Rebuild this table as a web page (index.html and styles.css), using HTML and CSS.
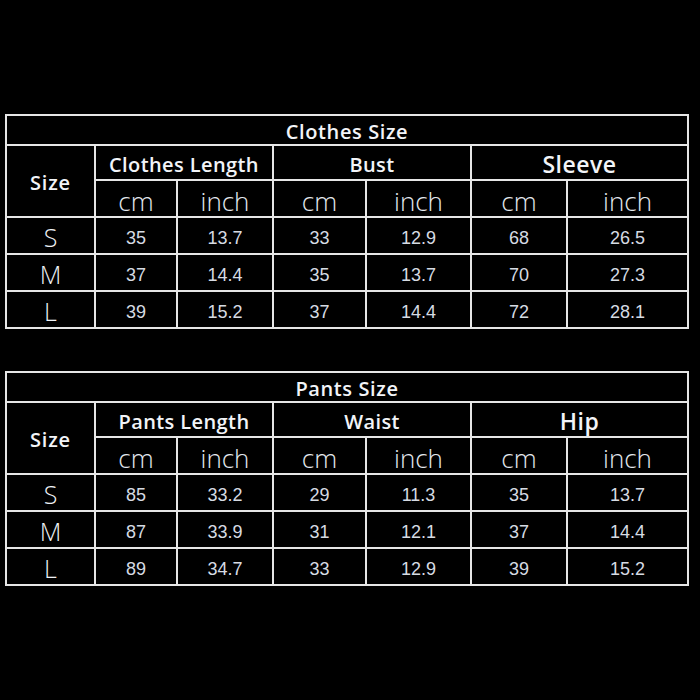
FILE: index.html
```html
<!DOCTYPE html>
<html>
<head>
<meta charset="utf-8">
<link rel="stylesheet" href="styles.css">
</head>
<body>
<div class="page">
  <table class="chart">
    <colgroup>
      <col class="c1"><col class="c2"><col class="c3"><col class="c4"><col class="c5"><col class="c6"><col class="c7">
    </colgroup>
    <tr class="title"><th colspan="7">Clothes Size</th></tr>
    <tr class="h1">
      <th rowspan="2" class="size">Size</th>
      <th colspan="2">Clothes Length</th>
      <th colspan="2">Bust</th>
      <th colspan="2" class="big">Sleeve</th>
    </tr>
    <tr class="h2"><td>cm</td><td>inch</td><td>cm</td><td>inch</td><td>cm</td><td>inch</td></tr>
    <tr class="row"><td class="lbl">S</td><td>35</td><td>13.7</td><td>33</td><td>12.9</td><td>68</td><td>26.5</td></tr>
    <tr class="row"><td class="lbl">M</td><td>37</td><td>14.4</td><td>35</td><td>13.7</td><td>70</td><td>27.3</td></tr>
    <tr class="row"><td class="lbl">L</td><td>39</td><td>15.2</td><td>37</td><td>14.4</td><td>72</td><td>28.1</td></tr>
  </table>

  <table class="chart">
    <colgroup>
      <col class="c1"><col class="c2"><col class="c3"><col class="c4"><col class="c5"><col class="c6"><col class="c7">
    </colgroup>
    <tr class="title"><th colspan="7">Pants Size</th></tr>
    <tr class="h1">
      <th rowspan="2" class="size">Size</th>
      <th colspan="2">Pants Length</th>
      <th colspan="2">Waist</th>
      <th colspan="2" class="big">Hip</th>
    </tr>
    <tr class="h2"><td>cm</td><td>inch</td><td>cm</td><td>inch</td><td>cm</td><td>inch</td></tr>
    <tr class="row"><td class="lbl">S</td><td>85</td><td>33.2</td><td>29</td><td>11.3</td><td>35</td><td>13.7</td></tr>
    <tr class="row"><td class="lbl">M</td><td>87</td><td>33.9</td><td>31</td><td>12.1</td><td>37</td><td>14.4</td></tr>
    <tr class="row"><td class="lbl">L</td><td>89</td><td>34.7</td><td>33</td><td>12.9</td><td>39</td><td>15.2</td></tr>
  </table>
</div>
</body>
</html>
```

FILE: styles.css
```css
html, body {
  margin: 0;
  padding: 0;
  background: #000;
}
.page {
  width: 700px;
  height: 700px;
  box-sizing: border-box;
  padding: 114px 0 0 5px;
  display: flex;
  flex-direction: column;
  gap: 42px;
}
.chart {
  border-collapse: collapse;
  table-layout: fixed;
  width: 684px;
  color: #f2f4f8;
  font-family: "Open Sans", "Noto Sans", sans-serif;
}
.chart th, .chart td {
  border: 2px solid #e6e6e6;
  padding: 4px 0 0 0;
  text-align: center;
  vertical-align: middle;
  line-height: 1;
}
.c1 { width: 89px; }
.c2 { width: 82px; }
.c3 { width: 96px; }
.c4 { width: 93px; }
.c5 { width: 105px; }
.c6 { width: 96px; }
.c7 { width: 121px; }

.title th {
  height: 24px;
  font-size: 20px;
  font-weight: 600;
  letter-spacing: 0.6px;
}
.h1 th {
  height: 29px;
  font-size: 20px;
  font-weight: 600;
  letter-spacing: 0.4px;
}
.h1 th.big {
  font-size: 23px;
  letter-spacing: 0.5px;
}
.h1 th.size {
  font-size: 20px;
  letter-spacing: 0.8px;
}
.h2 td {
  height: 31px;
  font-size: 26px;
  font-weight: 300;
  color: #e4e8ee;
}
.row td {
  height: 31px;
  font-family: "Liberation Sans", Arial, sans-serif;
  font-size: 18px;
  color: #d6dbe3;
}
.row td.lbl {
  font-family: "Open Sans", "Noto Sans", sans-serif;
  font-size: 25px;
  font-weight: 300;
  color: #eef1f5;
}
```
